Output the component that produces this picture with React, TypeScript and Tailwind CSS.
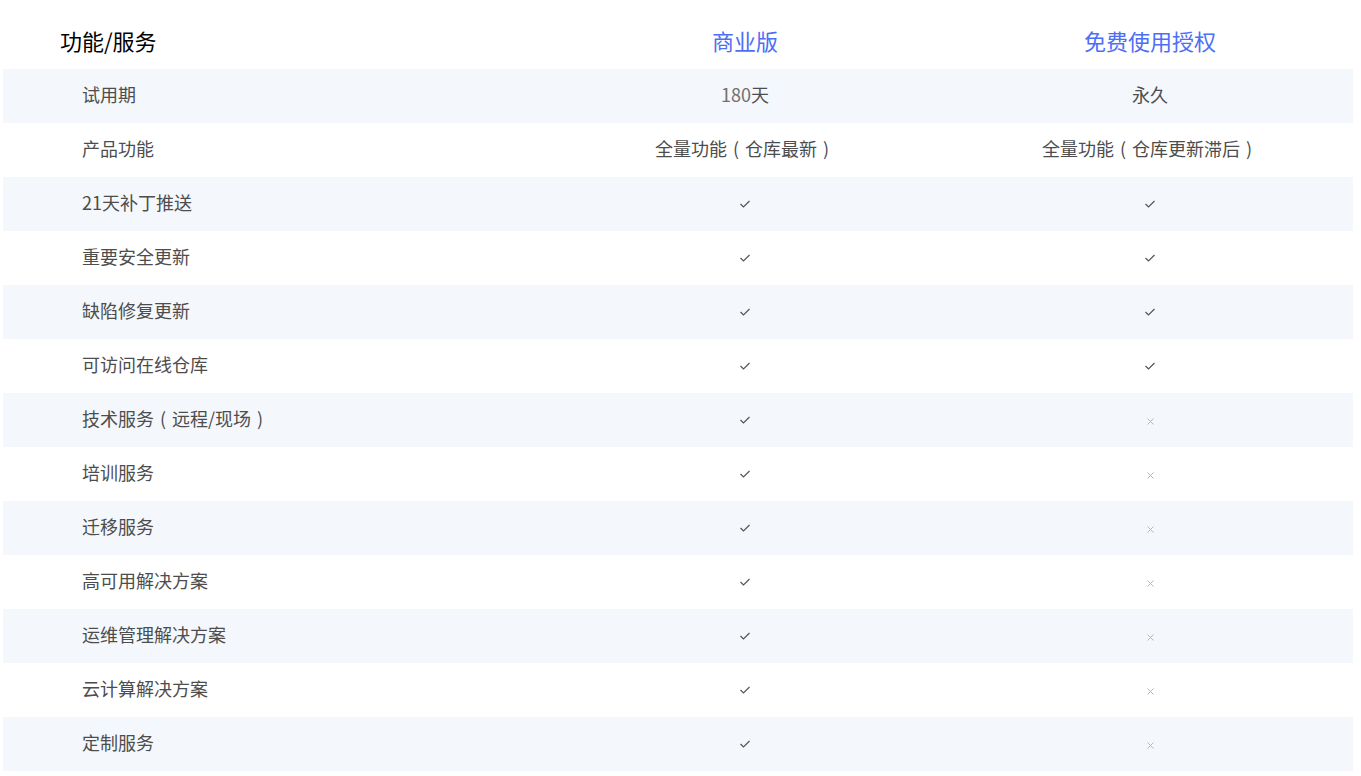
import React from "react";

type Cell = string | boolean;
const rows: [string, Cell, Cell][] = [
  ["试用期", "180天", "永久"],
  ["产品功能", "全量功能|仓库最新", "全量功能|仓库更新滞后"],
  ["21天补丁推送", true, true],
  ["重要安全更新", true, true],
  ["缺陷修复更新", true, true],
  ["可访问在线仓库", true, true],
  ["技术服务（远程/现场）", true, false],
  ["培训服务", true, false],
  ["迁移服务", true, false],
  ["高可用解决方案", true, false],
  ["运维管理解决方案", true, false],
  ["云计算解决方案", true, false],
  ["定制服务", true, false],
];

const P = ({ c }: { c: string }) => (
  <span className="inline-block w-[18px] text-center">{c === "（" ? "(" : ")"}</span>
);

function Label({ t }: { t: string }) {
  const m = t.match(/^(.*)（(.*)）$/);
  if (!m) return <span>{t}</span>;
  return (
    <span>
      {m[1]}
      <P c="（" />
      {m[2]}
      <P c="）" />
    </span>
  );
}

function Check() {
  return (
    <svg width="12" height="10" viewBox="0 0 12 10" className="mt-[3px]">
      <polyline points="1.5,5 4.5,8 10.5,2" fill="none" stroke="#555" strokeWidth="1.2" />
    </svg>
  );
}

function Cross() {
  return (
    <svg width="9" height="9" viewBox="0 0 9 9" className="mt-[7px]">
      <path d="M1.5 1.5 L7.5 7.5 M7.5 1.5 L1.5 7.5" stroke="#b8b8b8" strokeWidth="1" fill="none" />
    </svg>
  );
}

function Value({ v }: { v: Cell }) {
  if (v === true) return <Check />;
  if (v === false) return <Cross />;
  if (v.includes("|")) {
    const [a, b] = v.split("|");
    return (
      <span>
        {a}
        <P c="（" />
        {b}
        <P c="）" />
      </span>
    );
  }
  if (v === "180天")
    return (
      <span>
        <span className="text-[#707070]">180</span>天
      </span>
    );
  return <span>{v}</span>;
}

export default function App() {
  return (
    <div
      className="w-[1361px] h-[776px] bg-white overflow-hidden"
      style={{ fontFamily: '"Noto Sans CJK SC", "Noto Sans", sans-serif' }}
    >
      <div className="ml-[3px] w-[1350px]">
        <div className="grid grid-cols-[540px_404px_406px] h-[69px] items-center pt-[10px] leading-[30px]">
          <div className="pl-[57px] text-[22px] text-black">功能/服务</div>
          <div className="text-center text-[22px] text-[#4d6ef5]">商业版</div>
          <div className="text-center text-[22px] text-[#4d6ef5]">免费使用授权</div>
        </div>
        {rows.map((r, i) => (
          <div
            key={i}
            className={
              "grid grid-cols-[540px_404px_406px] h-[54px] items-center text-[18px] leading-[26px] text-[#4d4d4d] " +
              (i % 2 === 0 ? "bg-[#f4f7fb]" : "bg-white")
            }
          >
            <div className="pl-[79px] pb-[4px]">
              <Label t={r[0]} />
            </div>
            <div className="flex justify-center pb-[4px]">
              <Value v={r[1]} />
            </div>
            <div className="flex justify-center pb-[4px]">
              <Value v={r[2]} />
            </div>
          </div>
        ))}
      </div>
    </div>
  );
}
